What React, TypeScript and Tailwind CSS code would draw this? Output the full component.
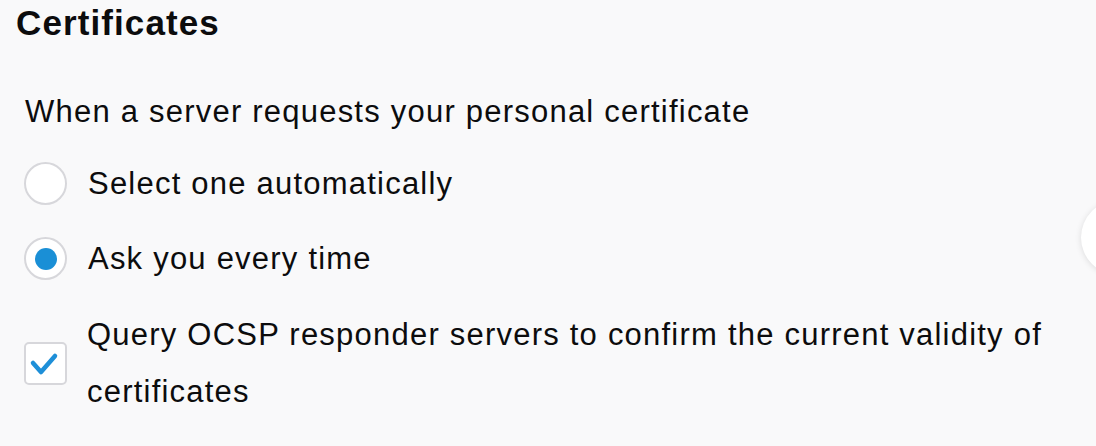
import { useState } from "react";

const font = { fontFamily: '"Liberation Sans", Arial, sans-serif' };

function Radio({ checked }: { checked: boolean }) {
  return (
    <span className="flex h-[43px] w-[43px] shrink-0 items-center justify-center rounded-full border-2 border-[#d7d7db] bg-white">
      {checked && <span className="h-[22px] w-[22px] rounded-full bg-[#1a8fd6]" />}
    </span>
  );
}

function Checkbox({ checked }: { checked: boolean }) {
  return (
    <span className="relative flex h-[43px] w-[43px] shrink-0 items-center justify-center rounded-[5px] border-2 border-[#d7d7db] bg-white">
      {checked && (
        <svg className="absolute left-[-2px] top-[-2px]" width="43" height="43" viewBox="0 0 43 43" fill="none">
          <polyline
            points="9,21 17,30 31,14"
            stroke="#1e8fd8"
            strokeWidth="4.5"
            strokeLinecap="round"
            strokeLinejoin="round"
          />
        </svg>
      )}
    </span>
  );
}

export default function App() {
  const [mode, setMode] = useState<"auto" | "ask">("ask");
  const [ocsp, setOcsp] = useState(true);

  return (
    <div
      className="relative h-[446px] w-full overflow-hidden bg-[#f9f9fa] text-[#0c0c0d]"
      style={font}
    >
      {/* Section heading */}
      <h1 className="pl-4 pt-[1px] text-[35px] font-bold leading-[44px] tracking-[1.1px]">
        Certificates
      </h1>

      <div className="mt-[47px] pl-6 text-[31px] tracking-[1.22px]">
        <p className="pl-[1px] leading-[40px]">
          When a server requests your personal certificate
        </p>

        {/* Radio options */}
        <div className="mt-[14px] flex flex-col">
          <label
            className="flex h-[75px] cursor-pointer items-center gap-[21px] leading-[40px]"
            onClick={() => setMode("auto")}
          >
            <Radio checked={mode === "auto"} />
            <span>Select one automatically</span>
          </label>
          <label
            className="flex h-[75px] cursor-pointer items-center gap-[21px] leading-[40px]"
            onClick={() => setMode("ask")}
          >
            <Radio checked={mode === "ask"} />
            <span>Ask you every time</span>
          </label>
        </div>

        {/* OCSP checkbox */}
        <label
          className="mt-[10px] flex cursor-pointer items-center gap-[20px] leading-[57px]"
          onClick={() => setOcsp((v) => !v)}
        >
          <Checkbox checked={ocsp} />
          <span className="max-w-[990px]">
            Query OCSP responder servers to confirm the current validity of certificates
          </span>
        </label>
      </div>

      {/* Floating round button clipped at the right edge */}
      <div className="absolute left-[1081px] top-[200px] h-[75px] w-[75px] rounded-full bg-white shadow-[0_1px_6px_rgba(0,0,0,0.12)]" />
    </div>
  );
}
